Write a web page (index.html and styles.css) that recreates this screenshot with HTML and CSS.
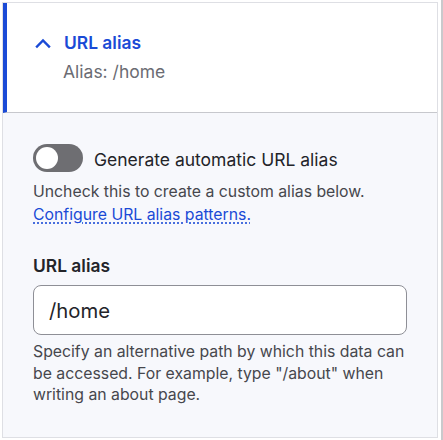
FILE: index.html
```html
<!DOCTYPE html>
<html>
<head>
<meta charset="utf-8">
<link rel="stylesheet" href="styles.css">
</head>
<body>
<div class="page">
  <div class="details">
    <div class="summary">
      <div class="summary-title">
        <svg class="chev" width="16" height="12" viewBox="0 0 16 12"><path d="M2 9.5 L8 3.5 L14 9.5" fill="none" stroke="currentColor" stroke-width="2.4" stroke-linecap="square"/></svg>
        <span>URL alias</span>
      </div>
      <div class="summary-sub">Alias: /home</div>
    </div>
    <div class="content">
      <div class="toggle-row">
        <span class="toggle"><span class="knob"></span></span>
        <span class="toggle-label">Generate automatic URL alias</span>
      </div>
      <div class="help">Uncheck this to create a custom alias below.<br><a class="link" href="#">Configure URL alias patterns.</a></div>
      <div class="field-label">URL alias</div>
      <div class="input">/home</div>
      <div class="help desc">Specify an alternative path by which this data can be accessed. For example, type "/about" when writing an about page.</div>
    </div>
  </div>
  <div class="scroll"></div>
</div>
</body>
</html>
```
FILE: styles.css
```css
html, body {
  margin: 0;
  padding: 0;
  background: #fff;
}
body {
  font-family: Inter, "Noto Sans", sans-serif;
  width: 443px;
  height: 440px;
  overflow: hidden;
}
.page {
  display: flex;
  padding: 2px 0 0 2px;
  height: 438px;
  box-sizing: border-box;
}
.details {
  width: 436px;
  height: 436px;
  border: 1px solid #dedfe4;
  box-sizing: border-box;
  background: #f7f8fc;
  display: flex;
  flex-direction: column;
}
.scroll {
  margin-left: 3px;
  width: 2px;
  background: #c9c9cc;
  margin-top: -2px;
  height: 440px;
}
.summary {
  background: #fff;
  border-left: 4px solid #1a4ad6;
  border-bottom: 1px solid #c7c8cd;
  padding: 28px 0 28px 27px;
}
.summary-title {
  display: flex;
  align-items: center;
  gap: 13px;
  color: #1a4ad6;
  font-weight: 600;
  font-size: 17.4px;
  line-height: 24px;
}
.chev {
  display: block;
  margin-left: 1px;
}
.summary-sub {
  padding-left: 29px;
  color: #6b6c73;
  font-size: 17.5px;
  line-height: 24px;
  margin-top: 5px;
}
.content {
  padding: 31px 30px 0 30px;
}
.toggle-row {
  display: flex;
  align-items: center;
  gap: 11px;
}
.toggle {
  width: 50px;
  height: 28px;
  border-radius: 14px;
  background: #6e6e72;
  position: relative;
  flex: none;
}
.knob {
  position: absolute;
  left: 3px;
  top: 3px;
  width: 22px;
  height: 22px;
  border-radius: 50%;
  background: #fff;
}
.toggle-label {
  color: #232429;
  font-size: 17.5px;
  line-height: 24px;
  margin-top: 3px;
}
.help {
  color: #46474d;
  font-size: 15.8px;
  line-height: 23px;
  margin-top: 8px;
}
.link {
  color: #1a4ad6;
  text-decoration: underline dotted;
  text-underline-offset: 3px;
}
.field-label {
  margin-top: 28px;
  font-weight: 600;
  font-size: 17.4px;
  line-height: 24px;
  color: #232429;
}
.input {
  margin-top: 7px;
  width: 374px;
  height: 50px;
  box-sizing: border-box;
  border: 1px solid #8e8f96;
  border-radius: 8px;
  background: #fff;
  padding: 0 15px;
  display: flex;
  align-items: center;
  font-size: 20.3px;
  color: #232429;
}
.desc {
  margin-top: 6px;
  line-height: 21.5px;
}
```
